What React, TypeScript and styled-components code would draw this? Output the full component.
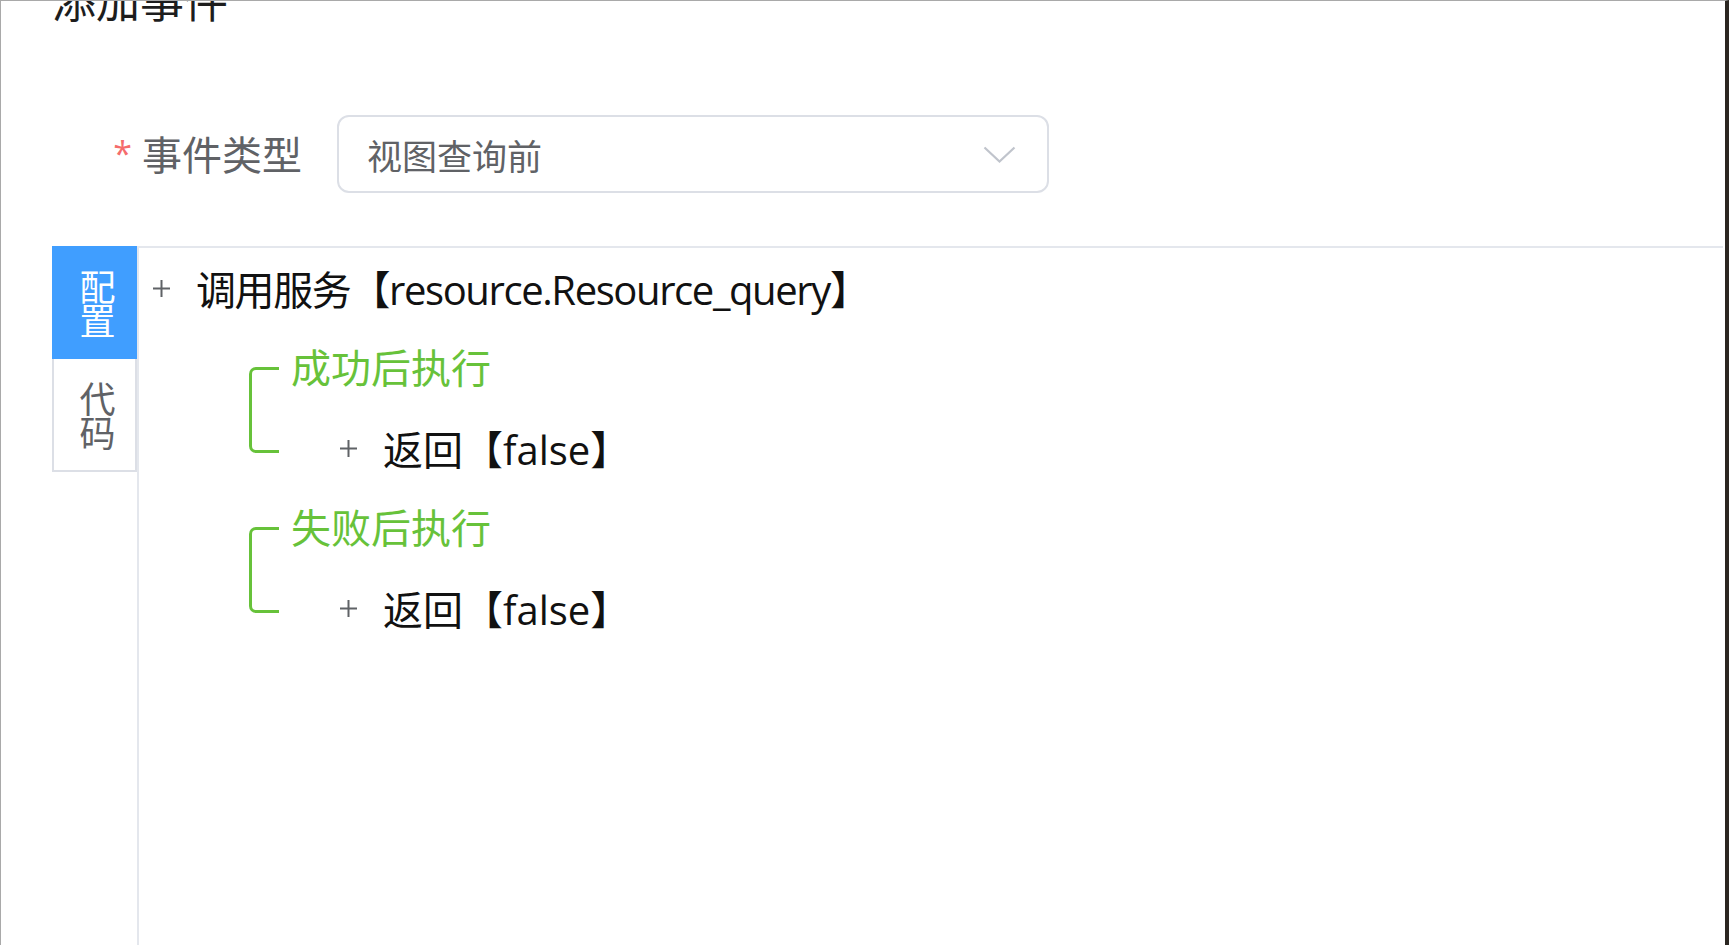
import React from "react";
import styled, { createGlobalStyle } from "styled-components";

const GlobalStyle = createGlobalStyle`
  html, body {
    margin: 0;
    padding: 0;
    background: #ffffff;
  }
  body {
    font-family: "Open Sans", "Noto Sans CJK SC", sans-serif;
  }
`;

const Window = styled.div`
  width: 1729px;
  height: 945px;
  box-sizing: border-box;
  border-top: 1px solid #a9a9a9;
  border-left: 1px solid #a9a9a9;
  border-right: 4px solid #2b2621;
  padding-left: 51px;
  display: flex;
  flex-direction: column;
  overflow: hidden;
  background: #ffffff;
`;

const Header = styled.div`
  height: 22px;
  display: flex;
  align-items: flex-end;
  flex-shrink: 0;
`;

const Title = styled.h2`
  margin: 0;
  font-size: 44px;
  line-height: 44px;
  font-weight: 400;
  color: #1d1d1d;
  flex-shrink: 0;
`;

const FormRow = styled.div`
  display: flex;
  align-items: center;
  height: 78px;
  margin-top: 92px;
  flex-shrink: 0;
`;

const FormLabel = styled.label`
  width: 285px;
  box-sizing: border-box;
  padding-right: 35px;
  text-align: right;
  font-size: 40px;
  line-height: 78px;
  color: #606266;
`;

const Required = styled.span`
  color: #f56c6c;
  font-size: 34px;
  margin-right: 10px;
  vertical-align: 4px;
`;

const Select = styled.div`
  width: 712px;
  height: 78px;
  box-sizing: border-box;
  border: 2px solid #dcdfe6;
  border-radius: 12px;
  display: flex;
  align-items: center;
  justify-content: space-between;
  padding: 0 31px 0 28px;
  font-size: 35px;
  color: #606266;
`;

const Editor = styled.div`
  flex: 1;
  display: flex;
  margin-top: 53px;
  margin-right: 2px;
  min-height: 0;
`;

const TabColumn = styled.div`
  width: 85px;
  display: flex;
  flex-direction: column;
  flex-shrink: 0;
`;

const Tab = styled.div<{ $active?: boolean }>`
  height: 113px;
  box-sizing: border-box;
  display: flex;
  align-items: center;
  justify-content: center;
  font-size: 36px;
  background: ${(p) => (p.$active ? "#409eff" : "#ffffff")};
  color: ${(p) => (p.$active ? "#ffffff" : "#606266")};
  border: ${(p) => (p.$active ? "none" : "2px solid #dcdfe6")};
  border-top: none;
`;

const TabLabel = styled.span`
  writing-mode: vertical-rl;
  text-orientation: upright;
  letter-spacing: -2px;
  line-height: 36px;
`;

const Content = styled.div`
  flex: 1;
  border-top: 2px solid #e4e7ed;
  border-left: 2px solid #e4e7ed;
  padding: 0 0 0 13px;
`;

const NodeRow = styled.div<{ $tight?: boolean }>`
  display: flex;
  align-items: center;
  height: 80px;
  font-size: 40px;
  letter-spacing: ${(p) => (p.$tight ? "-1.4px" : "0")};
  color: #111111;
  white-space: nowrap;
`;

const PlusIcon = styled.svg`
  width: 19px;
  height: 19px;
  margin-right: 25px;
  flex-shrink: 0;
`;

const Children = styled.div`
  margin-left: 97px;
`;

const Group = styled.div`
  display: flex;
`;

const Bracket = styled.div`
  width: 30px;
  box-sizing: border-box;
  margin: 39px 0 35px;
  border: 3px solid #67c23a;
  border-right: none;
  border-radius: 7px 0 0 7px;
  flex-shrink: 0;
`;

const GroupBody = styled.div`
  padding-left: 12px;
`;

const GroupLabel = styled.div`
  height: 80px;
  display: flex;
  align-items: center;
  font-size: 40px;
  color: #67c23a;
  padding-bottom: 4px;
  box-sizing: border-box;
`;

const GroupChildren = styled.div`
  margin-left: 48px;
`;

const Plus = () => (
  <PlusIcon viewBox="0 0 19 19">
    <path d="M9.5 1v17M1 9.5h17" stroke="#5f6266" strokeWidth="2" fill="none" />
  </PlusIcon>
);

const Chevron = () => (
  <svg width="33" height="17" viewBox="0 0 33 17">
    <path d="M1.5 1.5L16.5 15.5L31.5 1.5" stroke="#c0c4cc" strokeWidth="2.2" fill="none" />
  </svg>
);

const Node = ({ text, tight }: { text: string; tight?: boolean }) => (
  <NodeRow $tight={tight}>
    <Plus />
    {text}
  </NodeRow>
);

const Branch = ({ label, children }: { label: string; children: React.ReactNode }) => (
  <Group>
    <Bracket />
    <GroupBody>
      <GroupLabel>{label}</GroupLabel>
      <GroupChildren>{children}</GroupChildren>
    </GroupBody>
  </Group>
);

const App = () => {
  return (
    <>
      <GlobalStyle />
      <Window>
        <Header>
          <Title>添加事件</Title>
        </Header>

        <FormRow>
          <FormLabel>
            <Required>*</Required>事件类型
          </FormLabel>
          <Select>
            <span>视图查询前</span>
            <Chevron />
          </Select>
        </FormRow>

        <Editor>
          <TabColumn>
            <Tab $active>
              <TabLabel>配置</TabLabel>
            </Tab>
            <Tab>
              <TabLabel>代码</TabLabel>
            </Tab>
          </TabColumn>
          <Content>
            <Node text="调用服务【resource.Resource_query】" tight />
            <Children>
              <Branch label="成功后执行">
                <Node text="返回【false】" />
              </Branch>
              <Branch label="失败后执行">
                <Node text="返回【false】" />
              </Branch>
            </Children>
          </Content>
        </Editor>
      </Window>
    </>
  );
};

export default App;
